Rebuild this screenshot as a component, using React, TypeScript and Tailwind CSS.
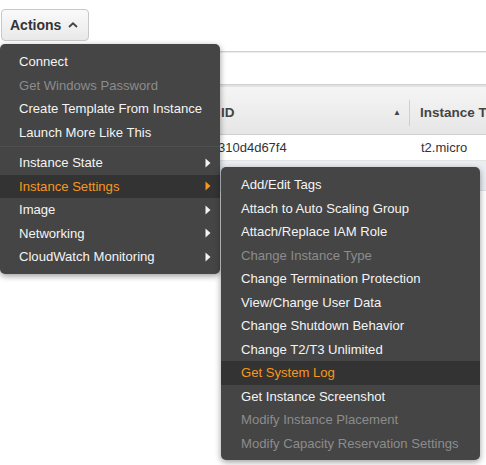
import { ReactNode } from 'react'

type Item = { label: string; disabled?: boolean; active?: boolean; sub?: boolean }

const mainTop: Item[] = [
  { label: 'Connect' },
  { label: 'Get Windows Password', disabled: true },
  { label: 'Create Template From Instance' },
  { label: 'Launch More Like This' },
]

const mainBottom: Item[] = [
  { label: 'Instance State', sub: true },
  { label: 'Instance Settings', sub: true, active: true },
  { label: 'Image', sub: true },
  { label: 'Networking', sub: true },
  { label: 'CloudWatch Monitoring', sub: true },
]

const settings: Item[] = [
  { label: 'Add/Edit Tags' },
  { label: 'Attach to Auto Scaling Group' },
  { label: 'Attach/Replace IAM Role' },
  { label: 'Change Instance Type', disabled: true },
  { label: 'Change Termination Protection' },
  { label: 'View/Change User Data' },
  { label: 'Change Shutdown Behavior' },
  { label: 'Change T2/T3 Unlimited' },
  { label: 'Get System Log', active: true },
  { label: 'Get Instance Screenshot' },
  { label: 'Modify Instance Placement', disabled: true },
  { label: 'Modify Capacity Reservation Settings', disabled: true },
]

function Arrow({ active }: { active?: boolean }) {
  return (
    <svg width="6" height="10" viewBox="0 0 6 10" className="ml-auto mr-[9px]">
      <path d="M0.5 0.5 L5.5 5 L0.5 9.5 Z" fill={active ? '#f7981d' : '#f2f2f2'} />
    </svg>
  )
}

function Row({ item, indent }: { item: Item; indent: string }) {
  const color = item.active ? 'text-[#f7981d]' : item.disabled ? 'text-[#8c8c8c]' : 'text-[#f4f4f4]'
  return (
    <div
      className={`flex items-center h-[23.5px] ${indent} text-[13.1px] leading-none cursor-default ${color} ${
        item.active ? 'bg-[#333333]' : ''
      }`}
    >
      <span className="whitespace-nowrap">{item.label}</span>
      {item.sub && <Arrow active={item.active} />}
    </div>
  )
}

function Menu({ children, className }: { children: ReactNode; className: string }) {
  return (
    <div
      className={`absolute bg-[#454545] rounded-[5px] shadow-[0_2px_6px_rgba(0,0,0,0.4)] ${className}`}
    >
      {children}
    </div>
  )
}

export default function App() {
  return (
    <div className="relative w-[486px] h-[465px] bg-white overflow-hidden font-['Liberation_Sans',Arial,sans-serif] text-[#333]">
      <div className="h-[51px] pt-[9px] pl-[1px]">
        <button className="flex items-center h-[32px] w-[88px] pl-[8px] rounded-[4px] border border-[#c8c8c8] bg-gradient-to-b from-[#fafafa] to-[#e9e9e9] text-[14px] font-bold text-[#333]">
          Actions
          <svg width="10" height="6" viewBox="0 0 10 6" className="ml-[7px]">
            <path d="M1 5 L5 1.3 L9 5" fill="none" stroke="#444" strokeWidth="1.8" />
          </svg>
        </button>
      </div>

      <div className="border-t border-[#d2d2d2] border-b-[2px] border-b-[#e2e2e2]">
        <div className="h-[33px] border-t border-t-[#ececec] border-b border-b-[#d0d0d0]" />
      </div>
      <div className="flex h-[48px] pt-[5px] items-center bg-gradient-to-b from-[#f5f5f5] to-[#e6e6e6] border-b border-[#cfcfcf] text-[13.5px] font-bold text-[#444] whitespace-nowrap">
        <span className="pl-[221px]">ID</span>
        <span className="ml-auto mr-[8px] text-[8px] text-[#444]">▲</span>
        <div className="w-px h-[26px] bg-[#cfcfcf]" />
        <span className="pl-[10px] w-[76px]">Instance Type</span>
      </div>
      <div className="flex h-[26px] pt-[1px] items-center border-b border-[#e4e4e4] text-[13px] text-[#333]">
        <span className="pl-[218px]">310d4d67f4</span>
        <span className="ml-auto w-[65px]">t2.micro</span>
      </div>
      <div className="h-[30px] bg-[#eaeef2] border-b border-[#dde3e8]" />

      <Menu className="left-0 top-[44px] w-[220px] pt-[6px] pb-[5px]">
        {mainTop.map((it) => (
          <Row key={it.label} item={it} indent="pl-[19px]" />
        ))}
        <div className="mt-[2px] mb-[4px] h-px bg-[#2c2c2c] border-b border-[#4f4f4f]" />
        {mainBottom.map((it) => (
          <Row key={it.label} item={it} indent="pl-[19px]" />
        ))}
      </Menu>

      <Menu className="left-[221px] top-[167px] w-[259px] pt-[6px] pb-[5px]">
        {settings.map((it) => (
          <Row key={it.label} item={it} indent="pl-[20px]" />
        ))}
      </Menu>
    </div>
  )
}
